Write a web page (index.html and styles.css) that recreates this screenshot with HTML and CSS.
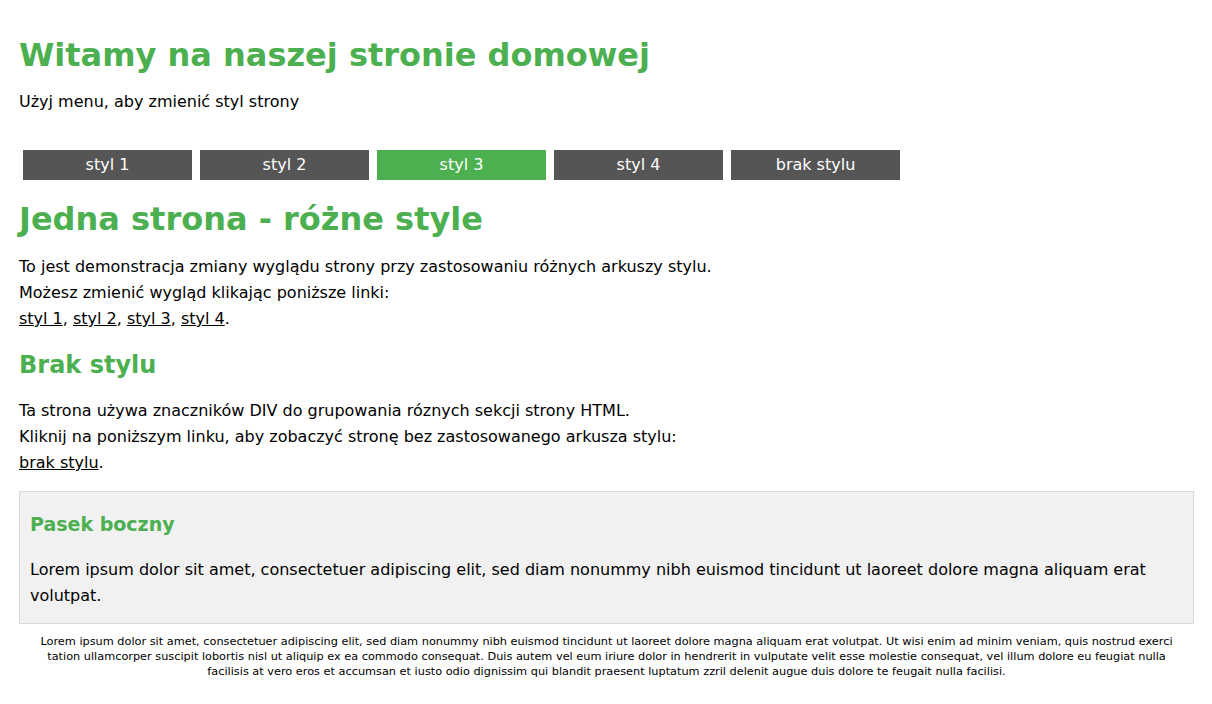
FILE: index.html
```html
<!DOCTYPE html>
<html lang="pl">
<head>
<meta charset="utf-8">
<title>Witamy na naszej stronie domowej</title>
<link rel="stylesheet" href="styles.css">
</head>
<body>
<div class="page">
  <header class="header">
    <h1 class="title">Witamy na naszej stronie domowej</h1>
    <p class="lead">Użyj menu, aby zmienić styl strony</p>
  </header>
  <nav class="menu">
    <a class="menu-item" href="#">styl 1</a>
    <a class="menu-item" href="#">styl 2</a>
    <a class="menu-item active" href="#">styl 3</a>
    <a class="menu-item" href="#">styl 4</a>
    <a class="menu-item" href="#">brak stylu</a>
  </nav>
  <main class="main">
    <h2 class="section-title">Jedna strona - różne style</h2>
    <p class="text">To jest demonstracja zmiany wyglądu strony przy zastosowaniu różnych arkuszy stylu.<br>
    Możesz zmienić wygląd klikając poniższe linki:<br>
    <a class="link" href="#">styl 1</a>, <a class="link" href="#">styl 2</a>, <a class="link" href="#">styl 3</a>, <a class="link" href="#">styl 4</a>.</p>
    <h3 class="sub-title">Brak stylu</h3>
    <p class="text">Ta strona używa znaczników DIV do grupowania róznych sekcji strony HTML.<br>
    Kliknij na poniższym linku, aby zobaczyć stronę bez zastosowanego arkusza stylu:<br>
    <a class="link" href="#">brak stylu</a>.</p>
  </main>
  <aside class="sidebar">
    <h3 class="sidebar-title">Pasek boczny</h3>
    <p class="sidebar-text">Lorem ipsum dolor sit amet, consectetuer adipiscing elit, sed diam nonummy nibh euismod tincidunt ut laoreet dolore magna aliquam erat volutpat.</p>
  </aside>
  <footer class="footer">
    <p class="footer-text">Lorem ipsum dolor sit amet, consectetuer adipiscing elit, sed diam nonummy nibh euismod tincidunt ut laoreet dolore magna aliquam erat volutpat. Ut wisi enim ad minim veniam, quis nostrud exerci tation ullamcorper suscipit lobortis nisl ut aliquip ex ea commodo consequat. Duis autem vel eum iriure dolor in hendrerit in vulputate velit esse molestie consequat, vel illum dolore eu feugiat nulla facilisis at vero eros et accumsan et iusto odio dignissim qui blandit praesent luptatum zzril delenit augue duis dolore te feugait nulla facilisi.</p>
  </footer>
</div>
</body>
</html>
```

FILE: styles.css
```css
html, body {
  margin: 0;
  padding: 0;
  background: #ffffff;
}

body {
  font-family: "DejaVu Sans", Verdana, sans-serif;
  color: #000;
}

.page {
  padding: 33px 18px 20px 19px;
}

.title {
  margin: 0;
  font-size: 32px;
  line-height: 44px;
  font-weight: bold;
  color: #4caf50;
}

.lead {
  margin: 12px 0 0;
  font-size: 16px;
  line-height: 26px;
}

.menu {
  display: flex;
  gap: 8px;
  margin: 35px 0 0 4px;
}

.menu-item {
  display: block;
  width: 169px;
  height: 30px;
  line-height: 30px;
  text-align: center;
  background: #555555;
  color: #ffffff;
  text-decoration: none;
  font-size: 16px;
}

.menu-item.active {
  background: #4caf50;
}

.section-title {
  margin: 19px 0 0;
  font-size: 32px;
  line-height: 40px;
  color: #4caf50;
}

.text {
  margin: 15px 0 0;
  font-size: 16px;
  line-height: 26px;
}

.link {
  color: #000;
  text-decoration: underline;
}

.sub-title {
  margin: 17px 0 0;
  font-size: 24px;
  line-height: 32px;
  color: #4caf50;
}

.sub-title + .text {
  margin-top: 17px;
}

.sidebar {
  margin-top: 15px;
  background: #f1f1f1;
  border: 1px solid #d8d8d8;
  padding: 18px 10px 14px;
}

.sidebar-title {
  margin: 0;
  font-size: 19px;
  line-height: 28px;
  color: #4caf50;
}

.sidebar-text {
  margin: 19px 0 0;
  font-size: 16px;
  line-height: 26px;
}

.footer {
  margin-top: 10px;
  padding: 0 20px;
}

.footer-text {
  margin: 0;
  text-align: center;
  font-size: 11.3px;
  line-height: 15px;
}
```
